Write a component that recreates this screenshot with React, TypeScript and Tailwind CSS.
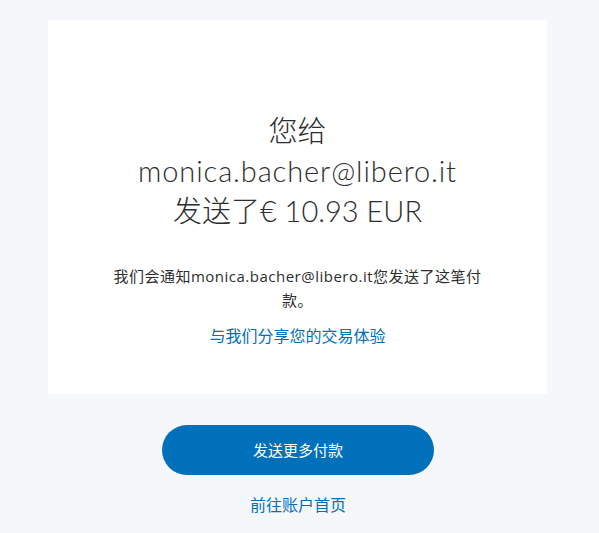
export default function App() {
  return (
    <div className="min-h-screen bg-[#f5f7fa] pt-5 pb-6 font-['Lato','Noto_Sans_CJK_SC',sans-serif] text-[#2c2e2f]">
      <div className="ml-12 w-[499px] bg-white pt-[91px] pb-[46px] flex flex-col items-center text-center">
        <h1 className="text-[29px] leading-[40px] font-light">
          您给
          <br />
          <span className="tracking-[0.9px]">monica.bacher@libero.it</span>
          <br />
          发送了€ 10.93 EUR
        </h1>
        <p className="mt-[33px] w-[376px] text-[15px] leading-6 tracking-[0.5px] font-['Open_Sans','Noto_Sans_CJK_SC',sans-serif]">
          我们会通知monica.bacher@libero.it您发送了这笔付款。
        </p>
        <a href="#" className="mt-3 text-[16px] leading-6 text-[#0070ba]">
          与我们分享您的交易体验
        </a>
      </div>
      <div className="mt-[31px] pr-[3px] flex flex-col items-center">
        <button className="w-[272px] h-[50px] rounded-full bg-[#0070ba] text-white text-[15px]">
          发送更多付款
        </button>
        <a href="#" className="mt-[18px] text-[16px] leading-6 text-[#0070ba]">
          前往账户首页
        </a>
      </div>
    </div>
  );
}
